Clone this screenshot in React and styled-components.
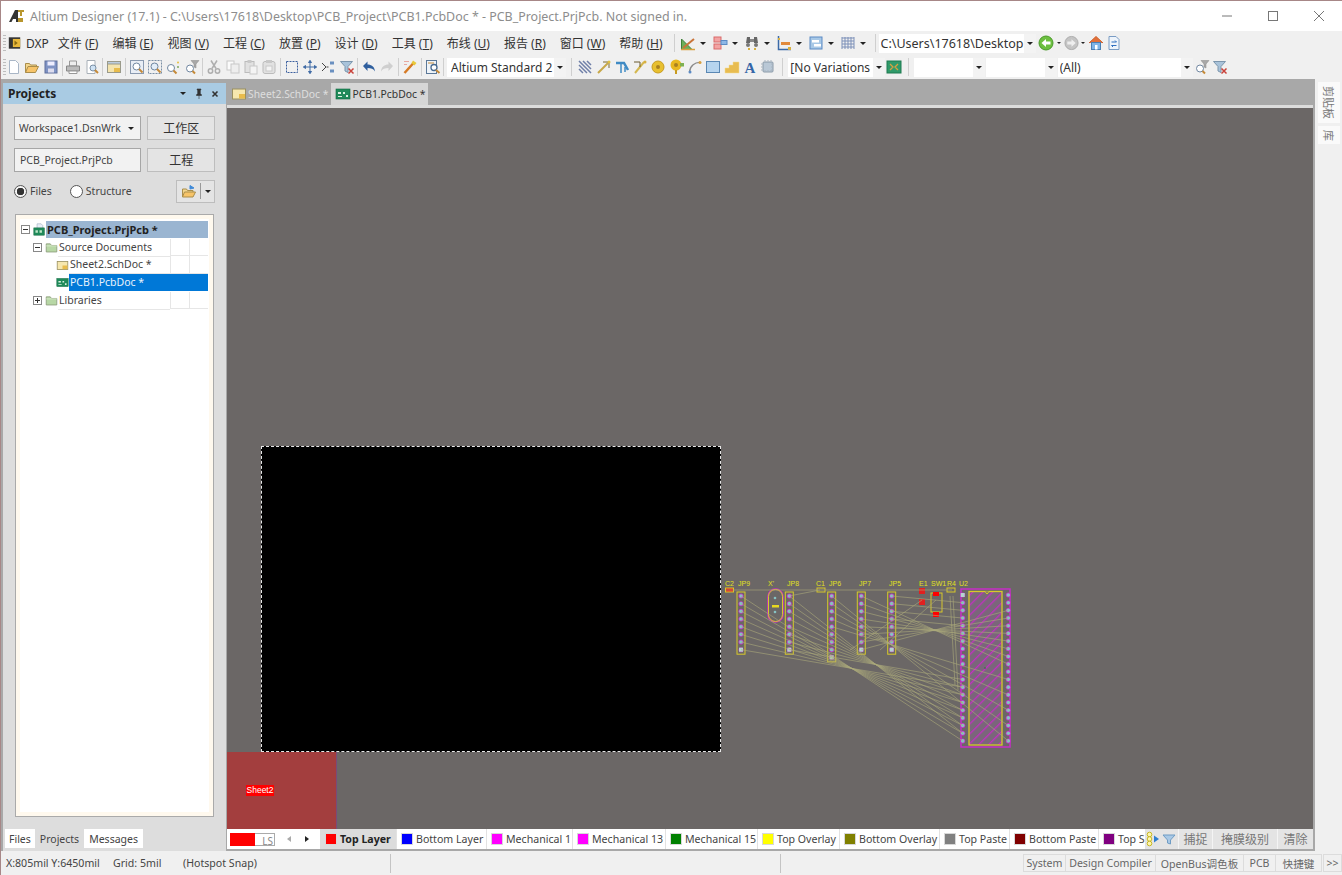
import React from 'react';
import styled, { createGlobalStyle } from 'styled-components';

const GlobalStyle = createGlobalStyle`
  html, body { margin: 0; padding: 0; background: #f0f0f0; }
  * { box-sizing: border-box; }
  body {
    font-family: "Noto Sans", "Open Sans", "Noto Sans CJK SC", sans-serif;
    font-size: 10.5px;
    color: #333;
    overflow: hidden;
  }
`;

/* ---------- icons ---------- */
const Svg = ({ children, size = 16 }) => (
  <svg width={size} height={size} viewBox="0 0 16 16" fill="none">{children}</svg>
);

const icons = {
  logo: <><path d="M0 14 L6 2 H9 L9 14 H7 V11 H4 L2.500 14Z" fill="#333" /><path d="M9 2h6v2h-2v4h-2V4H9z" fill="#b8962e" /><path d="M9 10h5v4H9z" fill="#b8962e" /></>,
  dxp: <><rect x="1" y="1" width="14" height="14" fill="#333" /><rect x="6" y="3" width="9" height="10" fill="#e8b83a" /><path d="M8 5l4 3-4 3z" fill="#8a6a10" /></>,
  doc: <path d="M3.500 1.500h6l3 3v10h-9z" fill="#fff" stroke="#a9b6c6" />,
  open: <><path d="M1.500 13.500v-9h4l1 1.500h6v2" fill="#f3d68d" stroke="#a98d4b" /><path d="M1.500 13.500l2.500-6h10.500l-3 6z" fill="#f7c469" stroke="#a98d4b" /></>,
  save: <><rect x="2" y="2" width="12" height="12" fill="#7f93c4" stroke="#5f6f9c" /><rect x="4.500" y="2.500" width="7" height="4" fill="#eef" /><rect x="5" y="9.500" width="6" height="4" fill="#dde" /></>,
  print: <><path d="M4.500 2h7v5h-7z" fill="#eee" stroke="#999" /><path d="M1.500 7h13v5h-13z" fill="#bbb" stroke="#888" /><path d="M4 12h8v2.500H4z" fill="#fff" stroke="#999" /></>,
  preview: <><path d="M3 1.500h8v13H3z" fill="#fff" stroke="#a8b0b8" /><circle cx="9" cy="9" r="3" fill="#cfe3f5" stroke="#7a8fa5" /><path d="M11 11l3 3" stroke="#c58a38" strokeWidth="2" /></>,
  schFolder: <><rect x="1.500" y="2.500" width="13" height="11" fill="#f4e4ae" stroke="#9a9a8a" /><rect x="1.500" y="2.500" width="13" height="2.500" fill="#bcd" stroke="#9a9a8a" /><rect x="8" y="9" width="6" height="4" fill="#e8bc4c" /></>,
  zoomFit: <><rect x="1.500" y="1.500" width="13" height="13" fill="#e9eef5" stroke="#8a9ab0" /><circle cx="7.500" cy="7.500" r="3.500" fill="#fff" stroke="#6f86a0" /><path d="M10 10l3.500 3.500" stroke="#c58a38" strokeWidth="2" /></>,
  zoomSel: <><rect x="1.500" y="1.500" width="13" height="13" stroke="#7a8fa5" strokeDasharray="2 1" /><circle cx="7.500" cy="7.500" r="3.500" fill="#e3eef8" stroke="#6f86a0" /><path d="M10 10l3.500 3.500" stroke="#c58a38" strokeWidth="2" /></>,
  zoomDot: <><circle cx="6" cy="9" r="3.500" fill="#fff" stroke="#6f86a0" /><path d="M8.500 11.500l3 3" stroke="#c58a38" strokeWidth="2" /><circle cx="13" cy="3.500" r="1" fill="#e8c040" /><circle cx="13" cy="8" r="1" fill="#7fa860" /></>,
  zoomFilter: <><circle cx="6" cy="9.500" r="3.500" fill="#fff" stroke="#6f86a0" /><path d="M8.500 12l2.500 2.500" stroke="#c58a38" strokeWidth="2" /><path d="M7 1.500h8l-3 3.500v4l-2-1V5z" fill="#a8a8a8" stroke="#888" strokeWidth=".5" /></>,
  cut: <><path d="M5 1.500l5 8M11 1.500l-5 8" stroke="#999" strokeWidth="1.500" /><circle cx="4.500" cy="12" r="2.200" stroke="#999" strokeWidth="1.500" /><circle cx="11.500" cy="12" r="2.200" stroke="#999" strokeWidth="1.500" /></>,
  copy: <><rect x="2" y="2" width="7" height="9" fill="#fff" stroke="#bbb" /><rect x="6" y="5" width="8" height="9" fill="#eee" stroke="#bbb" /></>,
  paste: <><rect x="2" y="2.500" width="9" height="11" fill="#ddd" stroke="#aaa" /><rect x="4.500" y="1" width="4" height="3" fill="#bbb" /><rect x="7" y="7" width="7" height="8" fill="#f6f6f6" stroke="#bbb" /></>,
  paste2: <><rect x="2" y="2.500" width="12" height="12" rx="2" fill="#ddd" stroke="#aaa" /><rect x="5" y="1" width="6" height="3" fill="#bbb" /><rect x="5" y="7" width="6" height="5" fill="#f6f6f6" stroke="#bbb" /></>,
  selRect: <rect x="2.500" y="2.500" width="11" height="11" stroke="#3a5f9e" strokeDasharray="2 1" />,
  move: <path d="M8 1.500v13M1.500 8h13M8 1.500L6.500 3.500h3zM8 14.500l-1.500-2h3zM1.500 8l2-1.500v3zM14.500 8l-2-1.500v3z" stroke="#3f6aa5" fill="#3f6aa5" />,
  crossSel: <><path d="M2 4l4 4-4 4M6.500 8h2" stroke="#444" /><rect x="10" y="2.500" width="4" height="3" fill="#6a90c0" /><rect x="10" y="10.500" width="4" height="3" fill="#6a90c0" /></>,
  filterX: <><path d="M1.500 2.500h12l-4.500 5v6l-3-1.500V7.500z" fill="#a9c3da" stroke="#7c96ad" /><path d="M9.500 9.500l5 5M14.500 9.500l-5 5" stroke="#c9423a" strokeWidth="1.500" /></>,
  undo: <path d="M2 7l4.500-4.500V5.500c4 0 7 2 7.500 7-1.500-3-4-3.500-7.500-3.500v3z" fill="#2f5f9e" />,
  redo: <path d="M14 7L9.500 2.500V5.500c-4 0-7 2-7.500 7 1.500-3 4-3.500 7.500-3.500v3z" fill="#c4c4c4" />,
  wand: <><path d="M2.500 14l9-10" stroke="#d67a25" strokeWidth="2.500" /><path d="M11 1.500l3.500 2.500-2 2.500L9.500 4z" fill="#e8c93a" /><path d="M2 2.500h5M2 5.500h3" stroke="#e8a8a0" /></>,
  report: <><rect x="1.500" y="1.500" width="10" height="13" fill="#eef3f8" stroke="#5b7898" /><circle cx="9" cy="8.500" r="3" fill="#fff" stroke="#46688e" strokeWidth="1.300" /><path d="M11 11l3.500 3" stroke="#c58a38" strokeWidth="2" /><path d="M3 4h6" stroke="#c58a38" /></>,
  measure: <><path d="M1.500 14.500V4l10.500 10.500z" fill="#6caf5a" stroke="#3f7f3a" /><path d="M3 13l11-9" stroke="#c9743a" strokeWidth="2" /><path d="M1 14.500h14" stroke="#d8a040" strokeWidth="1.500" /></>,
  align: <><rect x="2" y="2" width="7" height="5" fill="#f2a3a3" stroke="#d96a6a" /><rect x="2" y="9" width="7" height="5" fill="#f2a3a3" stroke="#d96a6a" /><rect x="9" y="5.500" width="6" height="4" fill="#8db7e6" stroke="#5b8ac4" /></>,
  find: <><path d="M3 2h3v6H2zM10 2h3l1 6h-4z" fill="#666" /><path d="M6 4h4v3H6z" fill="#888" /><circle cx="4" cy="10" r="2" fill="#777" /><circle cx="12" cy="10" r="2" fill="#777" /><rect x="4" y="13" width="2" height="2" fill="#d8b040" /><rect x="10" y="13" width="2" height="2" fill="#d8b040" /></>,
  axes: <><path d="M2.500 1v13.500H15" stroke="#3b6aa8" strokeWidth="1.500" /><rect x="5" y="7" width="9" height="3" fill="#e28a3c" /><rect x="2" y="3" width="2" height="2" fill="#d8b040" /><rect x="12" y="12" width="3" height="3" fill="#d8b040" /></>,
  sheets: <><rect x="2" y="2" width="12" height="12" fill="#a8c8e6" stroke="#5b8ac4" /><rect x="4" y="5" width="7" height="2.500" fill="#fff" /><rect x="6" y="9" width="7" height="2.500" fill="#fff" /></>,
  grid: <path d="M2 2v12M5 2v12M8 2v12M11 2v12M14 2v12M2 3h12M2 6h12M2 9h12M2 12h12" stroke="#7c90b8" />,
  back: <><circle cx="8" cy="8" r="7" fill="#6cbf3f" stroke="#4a9a2a" /><path d="M3.500 8L8 4v2.500h4.500v3H8V12z" fill="#fff" /></>,
  forward: <><circle cx="8" cy="8" r="7" fill="#c4c4c4" stroke="#aaa" /><path d="M12.500 8L8 4v2.500H3.500v3H8V12z" fill="#eee" /></>,
  home: <><path d="M1 8l7-6.500L15 8" fill="#e0703a" stroke="#d0602a" /><rect x="3.500" y="7.500" width="9" height="7" fill="#7fb4e6" stroke="#4a7fb4" /><rect x="7" y="10" width="2.500" height="4.500" fill="#fff" /></>,
  docNav: <><path d="M3 1.500h7l3 3v10H3z" fill="#eef4fb" stroke="#7a9cc4" /><path d="M5.500 7h5M10.500 7L9 5.500M10.500 10.500h-5M5.500 10.500L7 12" stroke="#2f6fc0" /></>,
  route: <><path d="M2 2l12 12M2 6l8 8M2 10l4 4M6 2l8 8M10 2l4 4" stroke="#6f7fa8" strokeWidth="1.500" /></>,
  trackA: <><path d="M2 14l10-10" stroke="#c8a848" strokeWidth="2" /><path d="M7 3h7M13 3v6" stroke="#7c6a30" /><circle cx="13" cy="3" r="1.500" fill="#e0c040" /></>,
  bus: <><path d="M2 4h8l4 7" stroke="#3f8ac4" strokeWidth="2.500" /><path d="M7 4v10M11 8v5" stroke="#3f8ac4" strokeWidth="1.500" /></>,
  trackB: <><path d="M3 14l9-11" stroke="#d4b850" strokeWidth="2" /><path d="M2 3h6M8 3v5" stroke="#6a5a30" /><circle cx="13" cy="3" r="1.500" fill="#d8b040" /></>,
  pad: <><circle cx="8" cy="8" r="6" fill="#e8c030" stroke="#c89c20" /><circle cx="8" cy="8" r="2" fill="#a88020" /></>,
  via: <><circle cx="7" cy="6" r="5.500" fill="#e8b820" /><circle cx="7" cy="6" r="2" fill="#a88020" /><path d="M7 11v4" stroke="#c89c20" strokeWidth="2" /><rect x="11" y="4" width="4" height="3.500" fill="#7fb050" /></>,
  arc: <><path d="M2.500 13C3 7 8 3 13.500 3.500" stroke="#8a8a8a" strokeWidth="1.300" /><circle cx="3" cy="13" r="1.500" fill="#5b8ac4" /><circle cx="13" cy="3.500" r="1.500" fill="#d8a040" /></>,
  fill: <rect x="1.500" y="2.500" width="13" height="11" fill="#b6d4ee" stroke="#5b88b4" />,
  poly: <path d="M1 14V9h4V6h4V3h6v11z" fill="#e8bc50" stroke="#f5dc90" strokeWidth=".5" />,
  text: <text x="8" y="14" textAnchor="middle" fontFamily="Liberation Serif, serif" fontWeight="700" fontSize="15" fill="#3566a8">A</text>,
  chip: <><rect x="3" y="3" width="10" height="10" rx="1" fill="#b9c8d6" stroke="#8a9aa8" /><path d="M5 1v14M8 1v14M11 1v14M1 5h14M1 8h14M1 11h14" stroke="#a8b4c0" strokeDasharray="1.500 8.500" /></>,
  board: <><rect x="1" y="2" width="14" height="12" fill="#2f9a6a" stroke="#1f7a50" /><path d="M4 5l3 3-3 3M12 5L9 8l3 3" stroke="#d8a040" strokeWidth="1.300" /></>,
  folderUp: <><path d="M1.500 14V6h4l1 1.500h5.500V9" fill="#f3d68d" stroke="#a98d4b" /><path d="M1.500 14l2-5h11l-2.500 5z" fill="#f7c469" stroke="#a98d4b" /><path d="M9 6V2.500L13 5z" fill="#3f8ad8" stroke="#3f8ad8" /></>,
  folder: <><path d="M1.500 13.500v-10h5l1.500 2h6.500v8z" fill="#b7d7a5" stroke="#8a9a7a" /><path d="M1.500 6h13" stroke="#dcecd0" /></>,
  project: <><path d="M5 1h5l2 2v5H5z" fill="#e8eef8" stroke="#9ab" strokeWidth=".7" /><rect x="1" y="6" width="13" height="9" fill="#1f8a5a" stroke="#106a40" strokeWidth=".6" /><path d="M3 9h3v3H3zM8 9h3v3H8z" fill="#bfe6c8" /></>,
  pcb: <><rect x="1" y="3" width="14" height="10" fill="#1f8a5a" stroke="#106a40" strokeWidth=".6" /><path d="M3 6h3v2H3zM8 6h2v2H8zM11 9h2v2h-2zM3 10h4v1H3z" fill="#d8f0e0" /></>,
  sch: <><rect x="1.500" y="3" width="13" height="10" fill="#f6e7ae" stroke="#9a9060" /><rect x="8" y="8" width="6" height="4.500" fill="#e8bc4c" /></>,
  layerMenu: <><circle cx="3.500" cy="3.500" r="2.300" stroke="#c8b820" fill="#fff6b0" /><circle cx="3.500" cy="8" r="2.300" stroke="#c8b820" fill="#fff6b0" /><circle cx="3.500" cy="12.500" r="2.300" stroke="#c8b820" fill="#fff6b0" /><path d="M8 4.500l5 3.500-5 3.500z" fill="#2f7fd0" /></>,
  funnel: <path d="M1 4h12L8.500 9v4l-3-1V9z" fill="#a9c9e6" stroke="#6f9cc4" />,
  pin: <path d="M6 3h4v.700l-.700.300v3.500l1.200 1.300v.700h-5v-.700L6.700 7.500V4L6 3.700zM8 9.500v3.500" fill="#333" stroke="#333" strokeWidth=".6" />,
  close: <path d="M5.500 5.500l5 5M10.500 5.500l-5 5" stroke="#333" strokeWidth="1.600" />,
};

const Icon = ({ name }) => <Svg>{icons[name]}</Svg>;

/* ---------- window chrome ---------- */
const Screen = styled.div`
  position: relative;
  width: 1342px;
  height: 875px;
  display: flex;
  flex-direction: column;
  overflow: hidden;
  background: #f0f0f0;
  &::after {
    content: '';
    position: absolute;
    left: 0;
    top: 0;
    width: 1px;
    height: 100%;
    background: #a78787;
  }
`;

const TitleBar = styled.div`
  height: 31px;
  flex: none;
  display: flex;
  align-items: center;
  background: #fff;
  border-top: 1px solid #a78787;
  padding-left: 9px;
`;

const TitleText = styled.span`
  margin-left: 5px;
  color: #8d8d8d;
  font-size: 12.45px;
  flex: 1;
  white-space: nowrap;
`;

const WindowBtn = styled.span`
  width: 46px;
  height: 30px;
  display: flex;
  align-items: center;
  justify-content: center;
`;

const Bar = styled.div`
  height: 24px;
  flex: none;
  display: flex;
  align-items: center;
  background: #f0f0f0;
  white-space: nowrap;
`;

const Grip = styled.span`
  width: 3px;
  height: 17px;
  margin: ${p => (p.$tight ? '0 -1px 0 3px' : '0 2px 0 3px')};
  flex: none;
  background: repeating-linear-gradient(#bdbdbd 0 1px, transparent 1px 3px);
`;

const Sep = styled.span`
  width: 1px;
  height: 18px;
  flex: none;
  margin: 0 ${p => p.$space || 1.65}px;
  background: #cfcfcf;
`;

const MenuItem = styled.span`
  font-size: 12px;
  margin-left: ${p => p.$ml || 0}px;
  margin-right: ${p => p.$gap || 14}px;
  color: #333;
  flex: none;
`;

const Tool = styled.span`
  width: ${p => p.$w || 18.3}px;
  height: 18px;
  flex: none;
  display: flex;
  align-items: center;
  justify-content: center;
  opacity: ${p => (p.$dim ? 0.75 : 1)};
`;

const Caret = styled.span`
  width: 0;
  height: 0;
  flex: none;
  margin: ${p => p.$m || '0 6px 0 4px'};
  border-left: ${p => p.$s || 3.5}px solid transparent;
  border-right: ${p => p.$s || 3.5}px solid transparent;
  border-top: ${p => p.$s || 3.5}px solid #222;
`;

const Combo = styled.span`
  width: ${p => p.$w}px;
  height: 19px;
  flex: none;
  margin-left: ${p => p.$ml || 0}px;
  display: flex;
  align-items: center;
  background: #fff;
  font-size: ${p => p.$fs || 12}px;
  padding-left: ${p => p.$pl || 4}px;
  overflow: hidden;
  color: #333;
`;

const ComboText = styled.span`
  flex: 1;
  overflow: hidden;
`;

const ComboArrow = styled.span`
  width: 12px;
  height: 19px;
  flex: none;
  display: flex;
  align-items: center;
  justify-content: center;
  background: #f3f3f3;
`;

/* ---------- body ---------- */
const Body = styled.div`
  flex: 1;
  min-height: 0;
  display: flex;
  background: #a8a8a8;
`;

const Panel = styled.aside`
  width: 223px;
  margin: 4px 1px 0 3px;
  flex: none;
  display: flex;
  flex-direction: column;
  background: #dddddd;
`;

const PanelHeader = styled.div`
  height: 21px;
  flex: none;
  display: flex;
  align-items: center;
  padding: 0 3px 0 5px;
  background: #a9cbe3;
  font-weight: 700;
  font-size: 12px;
  color: #222;
`;

const PanelTitle = styled.span`
  flex: 1;
`;

const PanelGlyph = styled.span`
  width: 16px;
  display: flex;
  justify-content: center;
  align-items: center;
`;

const PanelRows = styled.div`
  display: flex;
  flex-direction: column;
  gap: 8px;
  padding: 12px 11px 0 11px;
`;

const FormRow = styled.div`
  height: 24px;
  display: flex;
  gap: 6px;
`;

const Field = styled.div`
  width: 128px;
  height: 24px;
  display: flex;
  align-items: center;
  justify-content: space-between;
  background: #f2f2f2;
  border: 1px solid #a6a6a6;
  padding: 0 3px 0 ${p => p.$pl || 5}px;
  font-size: 10.5px;
  color: #444;
`;

const PanelButton = styled.div`
  width: 68px;
  height: 24px;
  display: flex;
  align-items: center;
  justify-content: center;
  border: 1px solid #bdbdbd;
  background: #e4e4e4;
  font-size: 12px;
  color: #333;
`;

const RadioRow = styled.div`
  height: 24px;
  margin-top: -1px;
  display: flex;
  align-items: center;
  font-size: 10.5px;
  color: #444;
`;

const Radio = styled.span`
  width: 13px;
  height: 13px;
  flex: none;
  border-radius: 50%;
  background: ${p => (p.$on ? 'radial-gradient(#333 0 3.500px, #f4f4f4 4px)' : '#fff')};
  border: 1px solid #555;
  margin-right: 3px;
  margin-left: ${p => p.$ml || 0}px;
`;

const SplitButton = styled.span`
  margin-left: auto;
  width: 39px;
  height: 23px;
  display: flex;
  align-items: center;
  border: 1px solid #bdbdbd;
  background: #e4e4e4;
`;

const SplitIcon = styled.span`
  width: 24px;
  display: flex;
  justify-content: center;
  border-right: 1px solid #999;
`;

const TreeBox = styled.div`
  margin: 11px 12px 0 12px;
  flex: 1;
  background: #fff;
  border: 1px solid #aaa;
  outline: 4px solid #fff9ee;
  outline-offset: -5px;
  padding: 6px 5px 0 5px;
  min-height: 0;
`;

const TreeRow = styled.div`
  height: 17.7px;
  display: flex;
  align-items: center;
  padding-left: ${p => p.$indent}px;
  font-size: 10.5px;
  color: #444;
`;

const Expander = styled.span`
  width: 9px;
  height: 9px;
  flex: none;
  margin-right: 3px;
  border: 1px solid #888;
  background: #fff;
  position: relative;
  &::before {
    content: '';
    position: absolute;
    left: 1px;
    top: 3px;
    width: 5px;
    height: 1px;
    background: #333;
  }
  &::after {
    content: '';
    display: ${p => (p.$closed ? 'block' : 'none')};
    position: absolute;
    left: 3px;
    top: 1px;
    width: 1px;
    height: 5px;
    background: #333;
  }
`;

const RowIcon = styled.span`
  width: 12px;
  height: 12px;
  flex: none;
  display: flex;
  align-items: center;
  justify-content: center;
  margin-right: 1px;
  & svg { width: 13px; height: 13px; flex: none; }
`;

const Label = styled.span`
  flex: 1;
  height: 17px;
  line-height: 17px;
  padding-left: 1px;
  white-space: nowrap;
  font-size: ${p => (p.$bold ? 11 : 10.5)}px;
  font-weight: ${p => (p.$bold ? 700 : 400)};
  color: ${p => (p.$bold ? '#222' : p.$sel ? '#e8f2fb' : '#444')};
  background: ${p => (p.$sel ? '#0078d7' : p.$bold ? '#9ab5d1' : 'transparent')};
`;

const Cell = styled.span`
  width: 19px;
  height: 17.7px;
  flex: none;
  border-left: 1px solid #e6e6e6;
  border-bottom: 1px solid #e6e6e6;
`;

const LabelWrap = styled.span`
  flex: 1;
  display: flex;
  border-bottom: 1px solid #e6e6e6;
`;

const PanelTabs = styled.div`
  height: 19px;
  margin: 12px 0 3px 2px;
  flex: none;
  display: flex;
  font-size: 10.5px;
`;

const PanelTab = styled.span`
  padding: 0 ${p => p.$pad || 5}px;
  display: flex;
  align-items: center;
  background: ${p => (p.$active ? '#dddddd' : '#fff')};
  color: #444;
`;

const Main = styled.main`
  flex: 1;
  min-width: 0;
  display: flex;
  flex-direction: column;
`;

const TabStrip = styled.div`
  height: 29px;
  flex: none;
  display: flex;
  align-items: flex-end;
  background: #a8a8a8;
  border-bottom: 3px solid #dcdcdc;
`;

const DocTab = styled.span`
  height: 22px;
  display: flex;
  align-items: center;
  gap: 1px;
  padding: 0 3px 0 4px;
  font-size: 10.35px;
  color: ${p => (p.$active ? '#333' : '#dedede')};
  background: ${p => (p.$active ? '#d6d6d6' : '#a8a8a8')};
`;

const Canvas = styled.div`
  flex: 1;
  position: relative;
  background: #6b6766;
  overflow: hidden;
`;

const BlackBoard = styled.div`
  position: absolute;
  left: 34px;
  top: 338px;
  width: 460px;
  height: 306px;
  background: #000;
  border: 1px dashed #e8e8e8;
`;

const SheetBlock = styled.div`
  position: absolute;
  left: 0;
  top: 644px;
  width: 110px;
  height: 77px;
  background: #a33e3e;
  border-right: 1px solid #7a4a7a;
`;

const SheetTag = styled.span`
  position: absolute;
  left: 19px;
  top: 33px;
  width: 28px;
  height: 11px;
  line-height: 11px;
  text-align: center;
  font-size: 8.5px;
  font-family: "Liberation Sans", sans-serif;
  color: #fff;
  background: #f00;
`;

const PcbLayer = styled.svg`
  position: absolute;
  left: 493px;
  top: 462px;
`;

const LayerBar = styled.div`
  height: 22px;
  flex: none;
  display: flex;
  align-items: stretch;
  background: #f0f0f0;
  border-bottom: 2px solid #a8a8a8;
  font-size: 10.6px;
  white-space: nowrap;
  overflow: hidden;
`;

const ColorPick = styled.span`
  width: 93px;
  flex: none;
  display: flex;
  align-items: center;
  padding-left: 3px;
  background: #fff;
`;

const RedSwatch = styled.span`
  width: 25px;
  height: 13px;
  background: #f00;
`;

const LsBox = styled.span`
  width: 20px;
  height: 13px;
  border: 1px solid #aaa;
  border-left: none;
  color: #888;
  font-size: 10px;
  line-height: 14px;
  text-align: right;
  padding-right: 1px;
`;

const Nav = styled.span`
  width: 0;
  height: 0;
  flex: none;
  margin-left: ${p => p.$ml}px;
  border-top: 3px solid transparent;
  border-bottom: 3px solid transparent;
  border-left: ${p => (p.$right ? '4px solid #222' : 'none')};
  border-right: ${p => (p.$right ? 'none' : '4px solid #aaa')};
`;

const LayerTab = styled.span`
  width: ${p => p.$w}px;
  flex: none;
  display: flex;
  align-items: center;
  gap: 4px;
  padding-left: ${p => (p.$active ? 6 : 5)}px;
  overflow: hidden;
  background: ${p => (p.$active ? '#dcdcdc' : '#fff')};
  border-right: 1px solid #e2e2e2;
  font-weight: ${p => (p.$active ? 700 : 400)};
  color: ${p => (p.$active ? '#222' : '#444')};
`;

const Chip = styled.span`
  width: 10px;
  height: 10px;
  flex: none;
  background: ${p => p.$c};
  outline: 1px solid #d8d8d8;
`;

const LayerMenu = styled.span`
  width: 32px;
  flex: none;
  display: flex;
  align-items: center;
  justify-content: center;
  background: #e4e4e4;
`;

const LayerAction = styled.span`
  width: ${p => p.$w}px;
  flex: none;
  display: flex;
  align-items: center;
  justify-content: center;
  background: #e4e4e4;
  border-left: 1px solid #f4f4f4;
  color: #777;
  font-size: 12px;
`;

const SideStrip = styled.aside`
  width: 29px;
  flex: none;
  display: flex;
  flex-direction: column;
  align-items: center;
  gap: 3px;
  padding-top: 3px;
  background: #f0f0f0;
  border-left: 2px solid #a8a8a8;
`;

const SideButton = styled.span`
  width: 22px;
  height: ${p => p.$h}px;
  display: flex;
  align-items: center;
  justify-content: center;
  background: #fafafa;
  writing-mode: vertical-rl;
  text-orientation: sideways;
  font-size: 11px;
  color: #777;
`;

const StatusBar = styled.footer`
  height: 24px;
  flex: none;
  display: flex;
  align-items: center;
  background: #f0f0f0;
  font-size: 10.6px;
  color: #444;
  white-space: nowrap;
`;

const StatusText = styled.span`
  width: ${p => p.$w}px;
  flex: none;
  padding-left: ${p => p.$pl || 0}px;
`;

const StatusSep = styled.span`
  width: 1px;
  height: 19px;
  flex: none;
  background: #c4c4c4;
  margin-right: ${p => p.$mr}px;
`;

const StatusButton = styled.span`
  width: ${p => p.$w}px;
  height: 18px;
  flex: none;
  display: flex;
  align-items: center;
  justify-content: center;
  border: 1px solid #dcdcdc;
  border-left-width: ${p => (p.$first ? 1 : 0)}px;
  margin-left: ${p => p.$ml || 0}px;
  color: #666;
`;

/* ---------- data ---------- */
const menus = [
  ['文件', 'F'], ['编辑', 'E'], ['视图', 'V'], ['工程', 'C'], ['放置', 'P'], ['设计', 'D'],
  ['工具', 'T'], ['布线', 'U'], ['报告', 'R'], ['窗口', 'W'], ['帮助', 'H'],
];

const topTools = ['measure', 'align', 'find', 'axes', 'sheets', 'grid'];

const fileTools = [
  ['doc', 'open', 'save'], ['print', 'preview'], ['schFolder'],
  ['zoomFit', 'zoomSel', 'zoomDot', 'zoomFilter'], ['cut', 'copy', 'paste', 'paste2'],
  ['selRect', 'move', 'crossSel', 'filterX'], ['undo', 'redo'], ['wand'], ['report'],
];

const placeTools = ['route', 'trackA', 'bus', 'trackB', 'pad', 'via', 'arc', 'fill', 'poly', 'text', 'chip'];

const layers = [
  ['Bottom Layer', '#0000ff', 90], ['Mechanical 1', '#ff00ff', 86], ['Mechanical 13', '#ff00ff', 93],
  ['Mechanical 15', '#008000', 92], ['Top Overlay', '#ffff00', 82], ['Bottom Overlay', '#808000', 100],
  ['Top Paste', '#808080', 70], ['Bottom Paste', '#800000', 89], ['Top S', '#800080', 47],
];

/* ---------- pcb drawing ---------- */
const range = (n, from, step) => Array.from({ length: n }, (_, i) => from + i * step);
const jpY = range(8, 596, 7.67);
const jp6Y = range(9, 596, 7.67);
const u2Y = range(20, 595, 7.68);
const U2L = 962.7;
const U2R = 1008.3;

const headers = [
  { x: 741, ys: jpY }, { x: 789.3, ys: jpY }, { x: 831.7, ys: jp6Y },
  { x: 861.3, ys: jpY }, { x: 891.7, ys: jpY },
];

const ratsnest = [
  [726, 590, 952, 590],
  [820, 590, 789, 596],
  ...jpY.map((y, i) => [741, y, U2L, u2Y[19 - i]]),
  ...jpY.map((y, i) => [789.3, y, U2L, u2Y[18 - i]]),
  ...jp6Y.slice(0, 5).map((y, i) => [831.7, y, U2R, u2Y[19 - i * 2]]),
  ...jpY.map((y, i) => [861.3, y, U2R, u2Y[9 - i]]),
  ...jpY.slice(0, 5).map((y, i) => [891.7, y, U2L, u2Y[i + 1]]),
  [950, 596, 955, 685], [953, 596, 958, 690], [936, 600, 880, 650], [922, 600, 850, 650],
];

const Pad = ({ x, y, square }) => (
  <g>
    <circle cx={x} cy={y} r="2.500" fill="#c72ec7" />
    {square
      ? <rect x={x - 2} y={y - 2} width="4" height="4" fill="#b4d4d0" />
      : <circle cx={x} cy={y} r="1.800" fill="#86c3c4" />}
  </g>
);

const labels = [
  ['C2', 725], ['JP9', 738], ["X'", 768], ['JP8', 787], ['C1', 816], ['JP6', 829],
  ['JP7', 859], ['JP5', 889], ['E1', 919], ['SW1', 931], ['R4', 947], ['U2', 959],
];

const PcbDrawing = () => (
  <PcbLayer width="310" height="190" viewBox="720 570 310 190">
    <defs>
      <pattern id="hatch" width="7" height="7" patternUnits="userSpaceOnUse" patternTransform="rotate(45)">
        <rect width="7" height="7" fill="#7a667a" />
        <rect width="1.300" height="7" fill="#c22fc2" />
      </pattern>
    </defs>
    <rect x="961" y="589" width="49" height="158" fill="none" stroke="#c72ec7" strokeWidth="1.500" />
    <rect x="969" y="591.500" width="33" height="153.500" fill="url(#hatch)" stroke="#d8c82a" strokeWidth="1.300" />
    <path d="M985 591.500l2 2.500 2-2.500" stroke="#d8c82a" fill="#6b6766" />
    <circle cx="985" cy="668" r=".8" fill="#1f7a30" />
    {u2Y.map((y, i) => (
      <g key={i}>
        <Pad x={U2L} y={y} square={i === 0} />
        <Pad x={U2R} y={y} />
      </g>
    ))}
    {headers.map(h => (
      <g key={h.x}>
        {h.ys.map((y, i) => <Pad key={i} x={h.x} y={y} square={i === h.ys.length - 1} />)}
        <rect x={h.x - 4} y="592" width="8" height={h.ys[h.ys.length - 1] - 592 + 4.500} fill="none" stroke="#d8c82a" />
      </g>
    ))}
    <rect x="768" y="589" width="15" height="33" rx="7.500" fill="none" stroke="#c72ec7" strokeWidth="1.500" />
    <rect x="768.500" y="589.500" width="14" height="32" rx="7" fill="none" stroke="#d8c82a" />
    <rect x="772" y="605" width="7" height="2.500" fill="#e8d820" />
    <circle cx="775" cy="598" r="1.300" fill="#86c3c4" />
    <circle cx="775" cy="612" r="1.300" fill="#86c3c4" />
    <rect x="725.500" y="588" width="8" height="4" fill="#e02020" stroke="#d8c82a" />
    <rect x="817" y="588" width="8" height="4" fill="none" stroke="#d8c82a" />
    <rect x="919" y="588" width="6" height="6" fill="#e02020" />
    <rect x="919" y="599" width="6" height="6" fill="#e02020" />
    <rect x="931" y="593" width="11" height="19" fill="none" stroke="#d8c82a" />
    <rect x="933" y="592" width="6" height="4" fill="#f00" />
    <rect x="933" y="612" width="6" height="5" fill="#f00" />
    <rect x="947" y="588" width="8" height="4" fill="none" stroke="#d8c82a" />
    <g stroke="#aba97a" strokeWidth=".6">
      {ratsnest.map((l, i) => <line key={i} x1={l[0]} y1={l[1]} x2={l[2]} y2={l[3]} />)}
    </g>
    {labels.map(([t, x]) => (
      <text key={t} x={x} y="586" fontSize="7" fontFamily="Liberation Sans, sans-serif" fill="#e0e020">{t}</text>
    ))}
  </PcbLayer>
);

const App = () => (
  <Screen>
    <GlobalStyle />
    <TitleBar>
      <Icon name="logo" />
      <TitleText>Altium Designer (17.1) - C:\Users\17618\Desktop\PCB_Project\PCB1.PcbDoc * - PCB_Project.PrjPcb. Not signed in.</TitleText>
      <WindowBtn><svg width="12" height="12"><path d="M1 6h10" stroke="#777" /></svg></WindowBtn>
      <WindowBtn><svg width="12" height="12"><rect x="1.500" y="1.500" width="9" height="9" fill="none" stroke="#777" /></svg></WindowBtn>
      <WindowBtn><svg width="12" height="12"><path d="M1 1l10 10M11 1L1 11" stroke="#777" /></svg></WindowBtn>
    </TitleBar>

    <Bar>
      <Grip />
      <Tool $w={13}><Icon name="dxp" /></Tool>
      <MenuItem $gap={9} $ml={5}>DXP</MenuItem>
      {menus.map(([label, key]) => (
        <MenuItem key={key}>{label} (<u>{key}</u>)</MenuItem>
      ))}
      <Sep $space={0} style={{ marginRight: 5, marginLeft: -3 }} />
      {topTools.map(name => (
        <React.Fragment key={name}>
          <Tool $w={16}><Icon name={name} /></Tool>
          <Caret $s={3} />
        </React.Fragment>
      ))}
      <Sep $space={3} />
      <Combo $w={157} $fs={12.5} $pl={2}>
        <ComboText>C:\Users\17618\Desktop</ComboText>
        <ComboArrow><Caret $s={3} $m="0" /></ComboArrow>
      </Combo>
      <Tool $w={17} style={{ marginLeft: 2 }}><Icon name="back" /></Tool>
      <Caret $s={2.5} $m="0 3px 0 2px" />
      <Tool $w={15}><Icon name="forward" /></Tool>
      <Caret $s={2} $m="0 2px 0 2px" />
      <Tool $w={18}><Icon name="home" /></Tool>
      <Tool $w={18}><Icon name="docNav" /></Tool>
    </Bar>

    <Bar>
      <Grip $tight />
      {fileTools.map((group, i) => (
        <React.Fragment key={i}>
          {group.map(name => <Tool key={name} $dim={['cut', 'copy', 'paste', 'paste2', 'redo'].includes(name)}><Icon name={name} /></Tool>)}
          <Sep />
        </React.Fragment>
      ))}
      <Combo $w={119} $ml={1}>
        <ComboText>Altium Standard 2</ComboText>
        <ComboArrow><Caret $s={3} $m="0" /></ComboArrow>
      </Combo>
      <Sep $space={4.5} />
      {placeTools.map(name => <Tool key={name}><Icon name={name} /></Tool>)}
      <Sep $space={5} />
      <Combo $w={97} $pl={2}>
        <ComboText>[No Variations</ComboText>
        <ComboArrow><Caret $s={3} $m="0" /></ComboArrow>
      </Combo>
      <Tool><Icon name="board" /></Tool>
      <Sep $space={4} />
      <Combo $w={71} $ml={1}><ComboText /><ComboArrow><Caret $s={3} $m="0" /></ComboArrow></Combo>
      <Combo $w={71} $ml={1}><ComboText /><ComboArrow><Caret $s={3} $m="0" /></ComboArrow></Combo>
      <Combo $w={135} $ml={1} $pl={2}>
        <ComboText>(All)</ComboText>
        <ComboArrow><Caret $s={3} $m="0" /></ComboArrow>
      </Combo>
      <Tool><Icon name="zoomFilter" /></Tool>
      <Tool><Icon name="filterX" /></Tool>
    </Bar>

    <Body>
      <Panel>
        <PanelHeader>
          <PanelTitle>Projects</PanelTitle>
          <Caret $s={3.5} $m="0 5px 0 0" />
          <PanelGlyph><Icon name="pin" /></PanelGlyph>
          <PanelGlyph><Icon name="close" /></PanelGlyph>
        </PanelHeader>
        <PanelRows>
          <FormRow>
            <Field $pl={4}>Workspace1.DsnWrk<Caret $s={3.5} $m="0 3px 0 0" /></Field>
            <PanelButton>工作区</PanelButton>
          </FormRow>
          <FormRow>
            <Field>PCB_Project.PrjPcb</Field>
            <PanelButton>工程</PanelButton>
          </FormRow>
          <RadioRow>
            <Radio $on />Files
            <Radio $ml={18} />Structure
            <SplitButton>
              <SplitIcon><Icon name="folderUp" /></SplitIcon>
              <Caret $s={3} $m="0 0 0 4px" />
            </SplitButton>
          </RadioRow>
        </PanelRows>
        <TreeBox>
          <TreeRow $indent={0}>
            <Expander />
            <RowIcon><Icon name="project" /></RowIcon>
            <Label $bold>PCB_Project.PrjPcb *</Label>
          </TreeRow>
          <TreeRow $indent={12}>
            <Expander />
            <RowIcon><Icon name="folder" /></RowIcon>
            <LabelWrap><Label>Source Documents</Label></LabelWrap>
            <Cell /><Cell />
          </TreeRow>
          <TreeRow $indent={35}>
            <RowIcon><Icon name="sch" /></RowIcon>
            <LabelWrap><Label>Sheet2.SchDoc *</Label></LabelWrap>
            <Cell /><Cell />
          </TreeRow>
          <TreeRow $indent={35}>
            <RowIcon><Icon name="pcb" /></RowIcon>
            <Label $sel>PCB1.PcbDoc *</Label>
          </TreeRow>
          <TreeRow $indent={12}>
            <Expander $closed />
            <RowIcon><Icon name="folder" /></RowIcon>
            <LabelWrap><Label>Libraries</Label></LabelWrap>
            <Cell /><Cell />
          </TreeRow>
        </TreeBox>
        <PanelTabs>
          <PanelTab $pad={4}>Files</PanelTab>
          <PanelTab $active>Projects</PanelTab>
          <PanelTab>Messages</PanelTab>
        </PanelTabs>
      </Panel>

      <Main>
        <TabStrip>
          <DocTab><Icon name="sch" />Sheet2.SchDoc *</DocTab>
          <DocTab $active><Icon name="pcb" />PCB1.PcbDoc *</DocTab>
        </TabStrip>
        <Canvas>
          <BlackBoard />
          <SheetBlock><SheetTag>Sheet2</SheetTag></SheetBlock>
          <PcbDrawing />
        </Canvas>
        <LayerBar>
          <ColorPick>
            <RedSwatch />
            <LsBox>LS</LsBox>
            <Nav $ml={12} />
            <Nav $right $ml={14} />
          </ColorPick>
          <LayerTab $w={77} $active><Chip $c="#ff0000" />Top Layer</LayerTab>
          {layers.map(([name, color, w]) => (
            <LayerTab key={name} $w={w}><Chip $c={color} />{name}</LayerTab>
          ))}
          <LayerMenu>
            <Icon name="layerMenu" />
            <Icon name="funnel" />
          </LayerMenu>
          <LayerAction $w={34}>捕捉</LayerAction>
          <LayerAction $w={65}>掩膜级别</LayerAction>
          <LayerAction $w={36}>清除</LayerAction>
        </LayerBar>
      </Main>

      <SideStrip>
        <SideButton $h={41}>剪贴板</SideButton>
        <SideButton $h={18}>库</SideButton>
      </SideStrip>
    </Body>

    <StatusBar>
      <StatusText $w={107} $pl={6}>X:805mil Y:6450mil</StatusText>
      <StatusText $w={70} $pl={6}>Grid: 5mil</StatusText>
      <StatusText $w={213} $pl={6}>(Hotspot Snap)</StatusText>
      <StatusSep $mr={389} />
      <StatusSep $mr={242} />
      <StatusButton $first $w={43}>System</StatusButton>
      <StatusButton $w={90}>Design Compiler</StatusButton>
      <StatusButton $w={88}>OpenBus调色板</StatusButton>
      <StatusButton $w={32}>PCB</StatusButton>
      <StatusButton $w={46}>快捷键</StatusButton>
      <StatusButton $first $ml={1} $w={19}>&gt;&gt;</StatusButton>
    </StatusBar>
  </Screen>
);

export default App;
